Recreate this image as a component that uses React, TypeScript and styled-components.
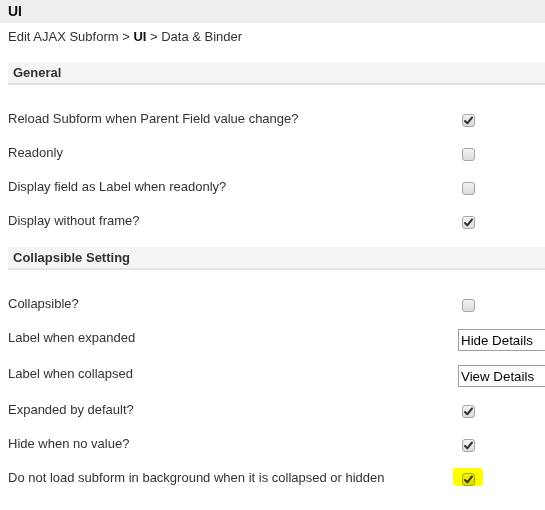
import React from 'react';
import styled, { createGlobalStyle } from 'styled-components';

const GlobalStyle = createGlobalStyle`
  html, body {
    margin: 0;
    padding: 0;
    background: #fff;
    overflow: hidden;
  }
  body {
    font-family: 'Liberation Sans', Arial, sans-serif;
    font-size: 13px;
    color: #333;
  }
`;

const Page = styled.div`
  width: 545px;
  height: 510px;
  overflow: hidden;
`;

const TitleBar = styled.div`
  height: 23px;
  line-height: 23px;
  padding: 0 8px;
  background: #eeeeee;
  font-size: 14px;
  font-weight: bold;
  color: #111;
`;

const Breadcrumb = styled.div`
  height: 28px;
  line-height: 28px;
  padding: 0 8px;
  color: #333;
  b {
    color: #111;
  }
`;

const Content = styled.div`
  padding: 11px 0 0 8px;
`;

const Section = styled.section`
  & + & {
    margin-top: 9px;
  }
`;

const SectionHeader = styled.div`
  height: 21px;
  line-height: 21px;
  padding: 0 5px;
  background: #f5f5f5;
  border-bottom: 2px solid #e3e3e3;
  font-weight: bold;
  color: #333;
  margin-bottom: 17px;
`;

const Row = styled.div<{ $tall?: boolean }>`
  display: flex;
  align-items: flex-start;
  min-height: ${(p) => (p.$tall ? 36 : 34)}px;
`;

const Label = styled.div`
  width: 450px;
  flex: none;
  line-height: 34px;
  white-space: nowrap;
`;

const Field = styled.div`
  flex: none;
  padding-top: 8px;
`;

const TextInput = styled.input`
  box-sizing: border-box;
  width: 150px;
  height: 22px;
  margin: 0;
  padding: 1px 2px;
  border: 1px solid #a0a0a0;
  font-family: 'Liberation Sans', Arial, sans-serif;
  font-size: 13.33px;
  color: #000;
  outline: none;
`;

const CheckWrap = styled.span<{ $marked?: boolean }>`
  position: relative;
  display: inline-block;
  margin: 4px 0 0 4px;
  ${(p) =>
    p.$marked &&
    `
    &::after {
      content: '';
      position: absolute;
      left: -9px;
      top: -5px;
      width: 30px;
      height: 18px;
      background: #ffff00;
      mix-blend-mode: multiply;
      border-radius: 1px 3px 2px 4px;
    }
  `}
`;

const Box = styled.span`
  box-sizing: border-box;
  display: flex;
  align-items: center;
  justify-content: center;
  width: 13px;
  height: 13px;
  border: 1px solid #a6a6a6;
  border-radius: 3px;
  background: linear-gradient(#f2f2f2, #dcdcdc);
`;

function Checkbox({ checked, marked }: { checked?: boolean; marked?: boolean }) {
  return (
    <CheckWrap $marked={marked}>
      <Box>
        {checked && (
          <svg width="9" height="9" viewBox="0 0 9 9">
            <path
              d="M1 5 L3.3 7.3 L8 1.5"
              fill="none"
              stroke="#333"
              strokeWidth="2"
              strokeLinecap="round"
              strokeLinejoin="round"
            />
          </svg>
        )}
      </Box>
    </CheckWrap>
  );
}

type Item =
  | { label: string; kind: 'check'; checked?: boolean; marked?: boolean }
  | { label: string; kind: 'text'; value: string };

const general: Item[] = [
  { label: 'Reload Subform when Parent Field value change?', kind: 'check', checked: true },
  { label: 'Readonly', kind: 'check' },
  { label: 'Display field as Label when readonly?', kind: 'check' },
  { label: 'Display without frame?', kind: 'check', checked: true },
];

const collapsible: Item[] = [
  { label: 'Collapsible?', kind: 'check' },
  { label: 'Label when expanded', kind: 'text', value: 'Hide Details' },
  { label: 'Label when collapsed', kind: 'text', value: 'View Details' },
  { label: 'Expanded by default?', kind: 'check', checked: true },
  { label: 'Hide when no value?', kind: 'check', checked: true },
  {
    label: 'Do not load subform in background when it is collapsed or hidden',
    kind: 'check',
    checked: true,
    marked: true,
  },
];

function Rows({ items }: { items: Item[] }) {
  return (
    <>
      {items.map((it) => (
        <Row key={it.label} $tall={it.kind === 'text'}>
          <Label>{it.label}</Label>
          <Field>
            {it.kind === 'text' ? (
              <TextInput defaultValue={it.value} />
            ) : (
              <Checkbox checked={it.checked} marked={it.marked} />
            )}
          </Field>
        </Row>
      ))}
    </>
  );
}

export default function App() {
  return (
    <Page>
      <GlobalStyle />
      <TitleBar>UI</TitleBar>
      <Breadcrumb>
        Edit AJAX Subform &gt; <b>UI</b> &gt; Data &amp; Binder
      </Breadcrumb>
      <Content>
        <Section>
          <SectionHeader>General</SectionHeader>
          <Rows items={general} />
        </Section>
        <Section>
          <SectionHeader>Collapsible Setting</SectionHeader>
          <Rows items={collapsible} />
        </Section>
      </Content>
    </Page>
  );
}
